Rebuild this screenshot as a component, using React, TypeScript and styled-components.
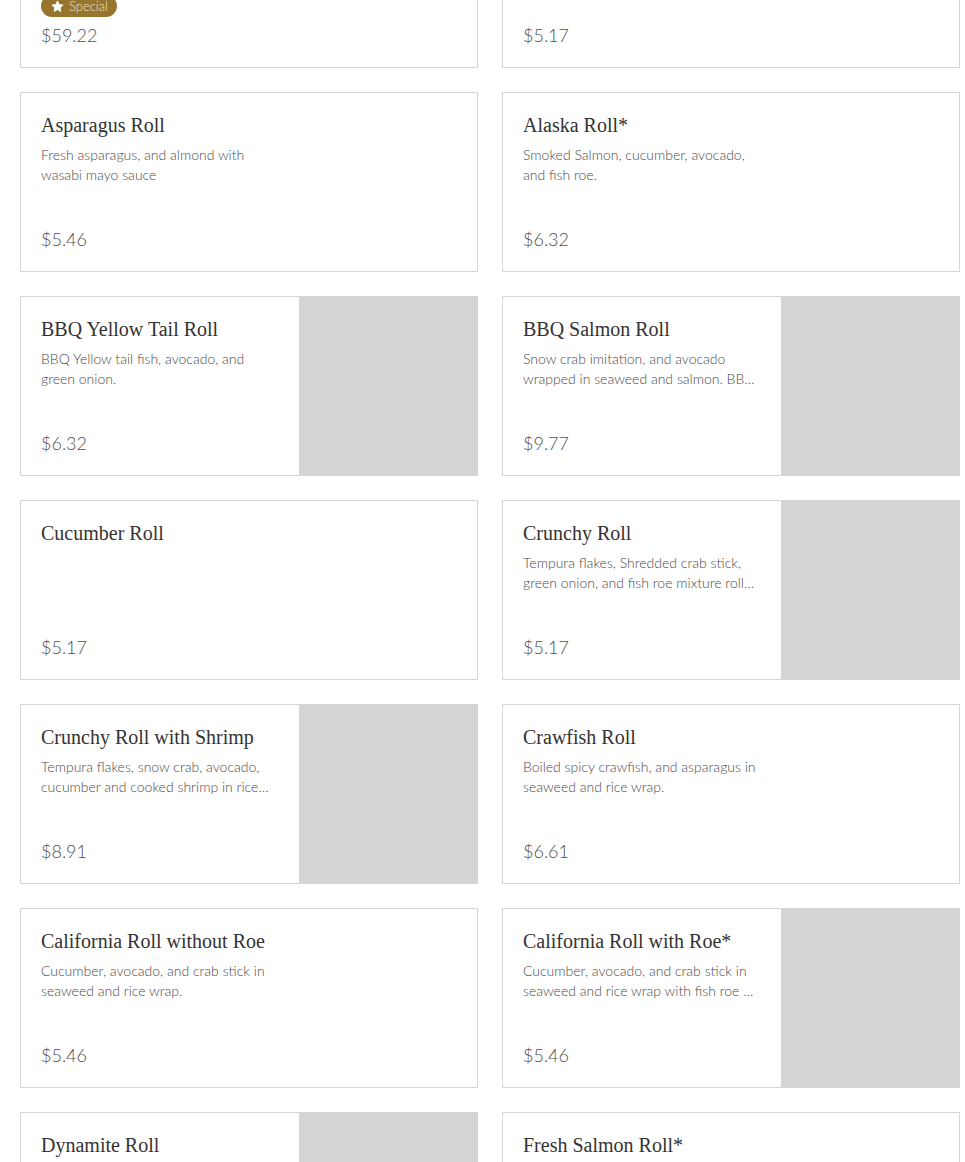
import React from 'react'
import styled, { createGlobalStyle } from 'styled-components'

const GlobalStyle = createGlobalStyle`
  html, body {
    margin: 0;
    padding: 0;
    background: #ffffff;
    overflow: hidden;
  }
`

interface Dish {
  name: string
  description?: string
  price: string
  image?: boolean
  special?: boolean
}

const dishes: Dish[] = [
  { name: 'Sushi Party Platter', description: 'Chef selection of rolls and nigiri for sharing.', price: '$59.22', special: true },
  { name: 'Avocado Roll', description: 'Fresh avocado in seaweed and rice wrap.', price: '$5.17' },
  { name: 'Asparagus Roll', description: 'Fresh asparagus, and almond with wasabi mayo sauce', price: '$5.46' },
  { name: 'Alaska Roll*', description: 'Smoked Salmon, cucumber, avocado, and fish roe.', price: '$6.32' },
  { name: 'BBQ Yellow Tail Roll', description: 'BBQ Yellow tail fish, avocado, and green onion.', price: '$6.32', image: true },
  { name: 'BBQ Salmon Roll', description: 'Snow crab imitation, and avocado wrapped in seaweed and salmon. BBQ sauce on top.', price: '$9.77', image: true },
  { name: 'Cucumber Roll', price: '$5.17' },
  { name: 'Crunchy Roll', description: 'Tempura flakes, Shredded crab stick, green onion, and fish roe mixture rolled in seaweed and rice.', price: '$5.17', image: true },
  { name: 'Crunchy Roll with Shrimp', description: 'Tempura flakes, snow crab, avocado, cucumber and cooked shrimp in rice wrap.', price: '$8.91', image: true },
  { name: 'Crawfish Roll', description: 'Boiled spicy crawfish, and asparagus in seaweed and rice wrap.', price: '$6.61' },
  { name: 'California Roll without Roe', description: 'Cucumber, avocado, and crab stick in seaweed and rice wrap.', price: '$5.46' },
  { name: 'California Roll with Roe*', description: 'Cucumber, avocado, and crab stick in seaweed and rice wrap with fish roe on top.', price: '$5.46', image: true },
  { name: 'Dynamite Roll', description: 'Baked spicy crawfish and scallop on top of California roll.', price: '$7.19', image: true },
  { name: 'Fresh Salmon Roll*', description: 'Fresh salmon in seaweed and rice wrap.', price: '$5.75' },
]

// page is scrolled: the first row of cards sits partly above the top edge
const Grid = styled.div`
  display: grid;
  grid-template-columns: repeat(2, 458px);
  column-gap: 24px;
  row-gap: 24px;
  padding-left: 20px;
  margin-top: -112px;
`

const Card = styled.div`
  display: flex;
  height: 180px;
  box-sizing: border-box;
  background: #ffffff;
`

const Info = styled.div<{ $withImage?: boolean }>`
  display: flex;
  flex-direction: column;
  box-sizing: border-box;
  width: ${(p) => (p.$withImage ? '279px' : '100%')};
  flex-shrink: 0;
  padding: 20px;
  border: 1px solid #d6d6d6;
  border-right: ${(p) => (p.$withImage ? 'none' : '1px solid #d6d6d6')};
`

const Photo = styled.div`
  flex: 1;
  background: #d4d4d4;
`

const Title = styled.div`
  font-family: "Liberation Serif", "Times New Roman", serif;
  font-size: 20px;
  line-height: 24px;
  color: #333333;
  white-space: nowrap;
`

const Description = styled.div`
  margin-top: 8px;
  width: 238px;
  font-family: Lato, "Noto Sans", sans-serif;
  font-weight: 300;
  font-size: 14px;
  line-height: 20px;
  color: #4a4a4a;
  display: -webkit-box;
  -webkit-line-clamp: 2;
  -webkit-box-orient: vertical;
  overflow: hidden;
`

const Bottom = styled.div`
  margin-top: auto;
  display: flex;
  flex-direction: column;
  align-items: flex-start;
`

const Badge = styled.div`
  display: inline-flex;
  align-items: center;
  gap: 5px;
  height: 22px;
  padding: 0 9px 0 10px;
  margin-bottom: 6px;
  border-radius: 11px;
  background: #97752f;
  color: #efe3cc;
  font-family: Lato, "Noto Sans", sans-serif;
  font-weight: 300;
  font-size: 13px;
`

const Price = styled.div`
  font-family: Lato, "Noto Sans", sans-serif;
  font-weight: 300;
  font-size: 18px;
  line-height: 24px;
  color: #4f4f4f;
`

const StarIcon = () => (
  <svg width="13" height="13" viewBox="0 0 24 24" fill="#ffffff" stroke="#ffffff" strokeWidth="2" strokeLinejoin="round">
    <path d="M12 2.5l2.9 6.1 6.6.8-4.9 4.6 1.3 6.6L12 17.3l-5.9 3.3 1.3-6.6-4.9-4.6 6.6-.8z" />
  </svg>
)

const DishCard: React.FC<{ dish: Dish }> = ({ dish }) => (
  <Card>
    <Info $withImage={dish.image}>
      <Title>{dish.name}</Title>
      {dish.description && <Description>{dish.description}</Description>}
      <Bottom>
        {dish.special && (
          <Badge>
            <StarIcon />
            Special
          </Badge>
        )}
        <Price>{dish.price}</Price>
      </Bottom>
    </Info>
    {dish.image && <Photo />}
  </Card>
)

const App: React.FC = () => (
  <>
    <GlobalStyle />
    <Grid>
      {dishes.map((dish) => (
        <DishCard key={dish.name} dish={dish} />
      ))}
    </Grid>
  </>
)

export default App
